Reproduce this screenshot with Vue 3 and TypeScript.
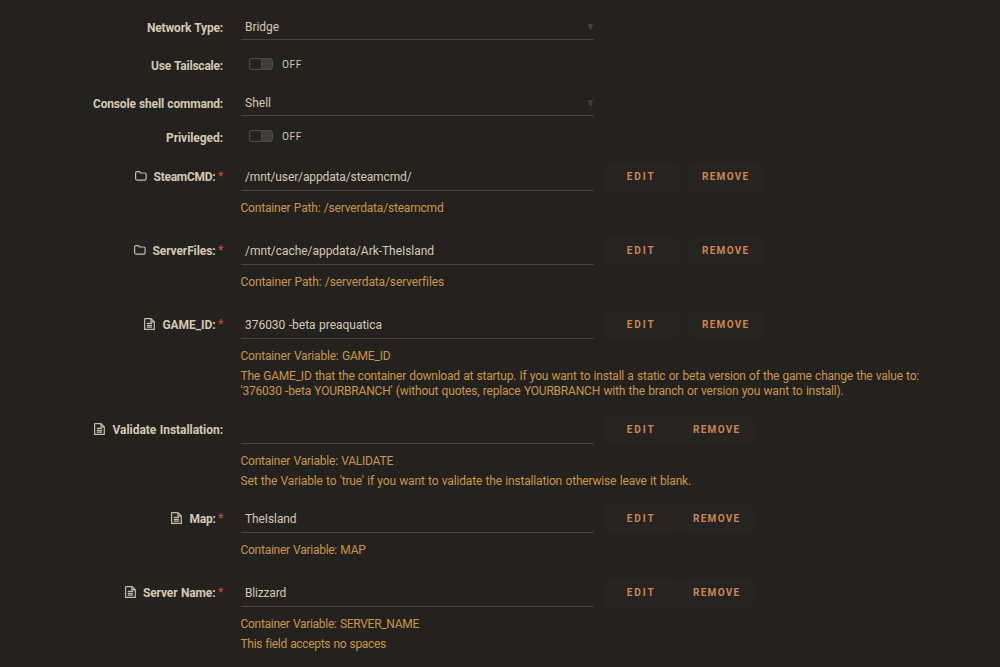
<script setup lang="ts">
import type { Directive } from 'vue'

interface Label {
  text: string
  width: number
}

interface Setting {
  kind: 'select' | 'toggle' | 'path' | 'variable'
  label: Label
  size: string
  value?: Label
  required?: boolean
  spaced?: boolean
  help?: Label[][]
}

const settings: Setting[] = [
  { kind: 'select', size: 'network', label: { text: 'Network Type:', width: 76 }, value: { text: 'Bridge', width: 34 } },
  { kind: 'toggle', size: 'tailscale', label: { text: 'Use Tailscale:', width: 72 } },
  { kind: 'select', size: 'shell', label: { text: 'Console shell command:', width: 130 }, value: { text: 'Shell', width: 26 } },
  { kind: 'toggle', size: 'privileged', label: { text: 'Privileged:', width: 57 } },
  {
    kind: 'path', size: 'short', required: true, spaced: true,
    label: { text: 'SteamCMD:', width: 62 },
    value: { text: '/mnt/user/appdata/steamcmd/', width: 166.5 },
    help: [[{ text: 'Container Path: /serverdata/steamcmd', width: 203 }]],
  },
  {
    kind: 'path', size: 'short', required: true, spaced: true,
    label: { text: 'ServerFiles:', width: 63 },
    value: { text: '/mnt/cache/appdata/Ark-TheIsland', width: 189 },
    help: [[{ text: 'Container Path: /serverdata/serverfiles', width: 203 }]],
  },
  {
    kind: 'variable', size: 'long', required: true, spaced: true,
    label: { text: 'GAME_ID:', width: 53 },
    value: { text: '376030 -beta preaquatica', width: 137 },
    help: [
      [{ text: 'Container Variable: GAME_ID', width: 150 }],
      [
        { text: 'The GAME_ID that the container download at startup. If you want to install a static or beta version of the game change the value to:', width: 678.5 },
        { text: "'376030 -beta YOURBRANCH' (without quotes, replace YOURBRANCH with the branch or version you want to install).", width: 603 },
      ],
    ],
  },
  {
    kind: 'variable', size: 'medium',
    label: { text: 'Validate Installation:', width: 110.5 },
    help: [
      [{ text: 'Container Variable: VALIDATE', width: 152.5 }],
      [{ text: "Set the Variable to 'true' if you want to validate the installation otherwise leave it blank.", width: 450.5 }],
    ],
  },
  {
    kind: 'variable', size: 'short', required: true,
    label: { text: 'Map:', width: 26 },
    value: { text: 'TheIsland', width: 51.5 },
    help: [[{ text: 'Container Variable: MAP', width: 125 }]],
  },
  {
    kind: 'variable', size: 'medium', required: true,
    label: { text: 'Server Name:', width: 72.5 },
    value: { text: 'Blizzard', width: 41 },
    help: [
      [{ text: 'Container Variable: SERVER_NAME', width: 178.5 }],
      [{ text: 'This field accepts no spaces', width: 145 }],
    ],
  },
]

const vFit: Directive<HTMLElement, number> = {
  mounted(el, { value }) {
    const count = (el.textContent ?? '').length
    const natural = el.getBoundingClientRect().width
    el.style.letterSpacing = `${(value - natural) / count}px`
  },
}
</script>

<template>
  <main class="form">
    <section v-for="s in settings" :key="s.label.text" class="row" :class="s.size">
      <div class="label">
        <svg v-if="s.kind === 'path'" class="folder" viewBox="0 0 12 10">
          <path d="M.6 2.1Q.6.7 2 .7h2.1q1.2 0 1.2 1.3h4.2q1.6 0 1.6 1.5v4q0 1.6-1.6 1.6H2.1Q.6 9.1.6 7.6z" />
        </svg>
        <svg v-if="s.kind === 'variable'" class="file" viewBox="0 0 11 12">
          <path d="M1.1.6h5.8l3.4 3.2v7.6H.6V1.1Q.6.6 1.1.6zM6.9.8v3.1h3.2M2.8 5.4h5.3M2.8 7.3h5.3M2.8 9.2h5.3" />
        </svg>
        <span v-fit="s.label.width" class="text">{{ s.label.text }}</span>
        <span v-if="s.required" class="star">*</span>
      </div>
      <div class="content">
        <div v-if="s.kind === 'toggle'" class="toggle">
          <span class="switch"><span class="knob"></span></span>
          <span v-fit="20" class="text off">OFF</span>
        </div>
        <div v-else class="controls">
          <div class="field">
            <span v-if="s.value" v-fit="s.value.width" class="text">{{ s.value.text }}</span>
            <svg v-if="s.kind === 'select'" class="arrow" viewBox="0 0 5 6"><path d="M0 0h5L3.2 6H1.8z" /></svg>
          </div>
          <div v-if="s.kind !== 'select'" class="buttons" :class="{ spaced: s.spaced }">
            <button type="button"><span v-fit="29" class="text">EDIT</span></button>
            <button type="button"><span v-fit="47.5" class="text">REMOVE</span></button>
          </div>
        </div>
        <div v-if="s.help" class="help">
          <p v-for="(block, i) in s.help" :key="i">
            <span v-for="line in block" :key="line.text" class="line">
              <span v-fit="line.width" class="text">{{ line.text }}</span>
            </span>
          </p>
        </div>
      </div>
    </section>
  </main>
</template>

<style>
body {
  background: #24221f;
  overflow: hidden;
}
</style>

<style scoped>
.form {
  box-sizing: border-box;
  height: 667px;
  padding-top: 14px;
  overflow: hidden;
  background: #24221f;
  color: #d4c8b0;
  font: 12px/15px Roboto, "Noto Sans", sans-serif;
  word-spacing: 0.6px;
}
.row {
  display: grid;
  grid-template-columns: 223px 1fr;
  column-gap: 17.5px;
  align-items: start;
}
.network, .tailscale { height: 38px; }
.shell { height: 34px; }
.privileged { height: 39px; }
.short { height: 74px; }
.medium { height: 89px; }
.long { height: 105px; }
.text {
  display: inline-block;
  white-space: pre;
}
.label {
  display: flex;
  justify-content: flex-end;
  align-items: center;
  height: 26px;
  font-weight: 700;
}
.label .text {
  padding-top: 2px;
}
.star {
  width: 5px;
  margin-left: 2.5px;
  color: #b84c3e;
  font-weight: 700;
  font-size: 12px;
}
.folder, .file {
  fill: none;
  stroke: #c7bca5;
  stroke-width: 1.2;
}
.folder {
  width: 12px;
  height: 10px;
  margin-right: 6.5px;
}
.file {
  width: 11px;
  height: 12px;
  margin-right: 7.5px;
}
.controls {
  display: flex;
  gap: 10px;
}
.field {
  box-sizing: border-box;
  display: flex;
  justify-content: space-between;
  align-items: center;
  width: 353.5px;
  height: 28px;
  padding: 0 1px 1px 4.5px;
  border-bottom: 1px solid #42403b;
}
.field .text {
  padding-top: 2px;
}
.network .field, .shell .field {
  height: 26px;
  padding-bottom: 0;
}
.arrow {
  width: 5px;
  height: 6px;
  fill: #42403c;
}
.toggle {
  display: flex;
  align-items: center;
  height: 24px;
  padding-left: 8.5px;
}
.switch {
  box-sizing: border-box;
  width: 24px;
  height: 12px;
  margin-right: 9px;
  border: 1px solid #4b4944;
  border-radius: 3px;
  background: #403f3a;
}
.knob {
  box-sizing: border-box;
  display: block;
  width: 12px;
  height: 10px;
  border-right: 1px solid #4b4944;
  border-radius: 2px;
  background: #272522;
}
.off {
  font-size: 10px;
}
.buttons {
  display: flex;
  gap: 1px;
}
.buttons.spaced {
  gap: 10px;
}
button {
  width: 74.5px;
  height: 28px;
  padding: 0;
  border: 0;
  border-radius: 3px;
  background: #262421;
  color: #cd8551;
  font: 700 10px/14px Roboto, "Noto Sans", sans-serif;
  text-align: center;
}
.help {
  padding-top: 10px;
  color: #c9954a;
}
.help p {
  margin: 0 0 4.5px;
}
.line {
  display: block;
  height: 15px;
}
</style>
